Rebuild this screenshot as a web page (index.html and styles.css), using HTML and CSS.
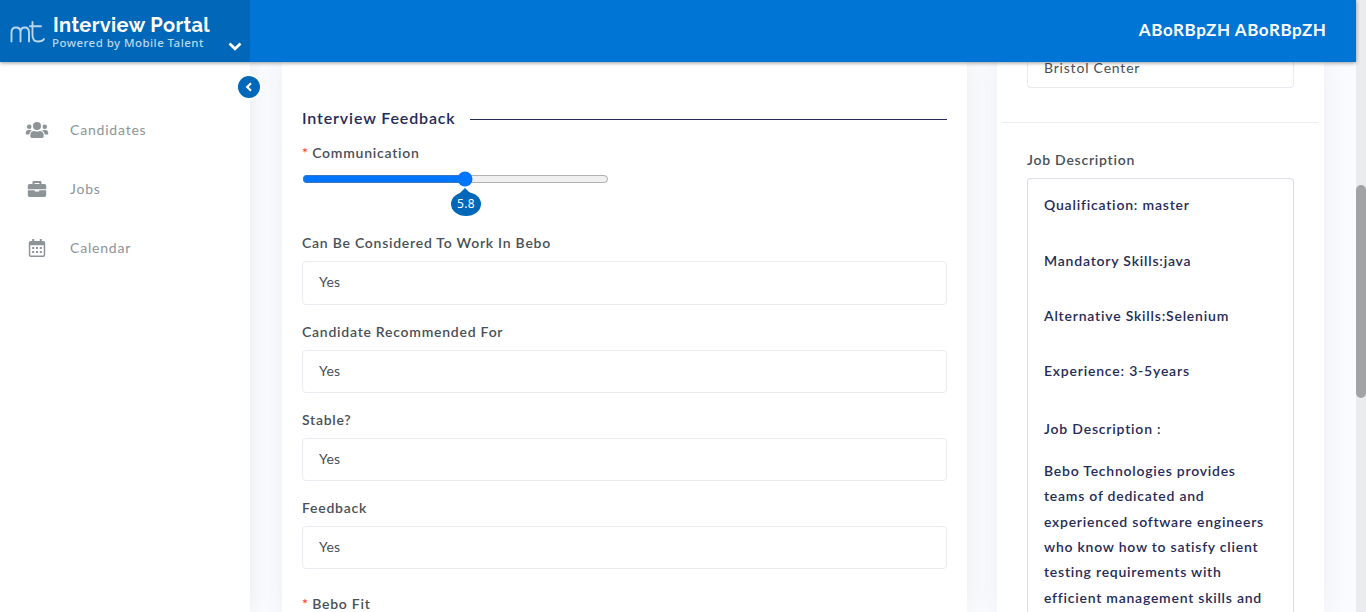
FILE: index.html
```html
<!DOCTYPE html>
<html lang="en">
<head>
<meta charset="utf-8">
<title>Interview Portal</title>
<link rel="stylesheet" href="styles.css">
</head>
<body>
<div class="viewport">
  <div class="app">
    <header class="header">
      <div class="brand">
        <svg class="logo" width="36" height="24" viewBox="0 0 36 24" fill="none" stroke="currentColor" stroke-width="1.9" stroke-linecap="round"><path d="M1.500 20.500V11.500C1.500 8 3.500 6.500 6 6.500S10.500 8 10.500 11V20.500M10.500 11C10.500 8 12.500 6.500 15 6.500S19 8 19 11.500V20.500M22.500 1V14C22.500 18.500 24.500 20.500 28 20.500C30.500 20.500 33 20 34 18M20 5.200H31"/></svg>
        <div class="brand-text">
          <div class="brand-name">Interview Portal</div>
          <div class="brand-sub">Powered by Mobile Talent</div>
        </div>
        <svg class="brand-arrow" width="14" height="10" viewBox="0 0 14 10" fill="none" stroke="#fff" stroke-width="2.700"><path d="M1.500 1.500L7 6.800L12.500 1.500"/></svg>
      </div>
      <div class="user">ABoRBpZH ABoRBpZH</div>
    </header>
    <div class="body">
      <nav class="sidebar">
        <button class="collapse" aria-label="Collapse"><svg width="8" height="10" viewBox="0 0 8 10" fill="none" stroke="#fff" stroke-width="2.200"><path d="M6 1.200L2.200 5L6 8.800"/></svg></button>
        <a class="nav-item"><svg class="nav-icon" width="24" height="20" viewBox="0 0 24 20" fill="currentColor"><circle cx="12" cy="6" r="4"/><circle cx="4.200" cy="6.700" r="2.300"/><circle cx="19.800" cy="6.700" r="2.300"/><path d="M5.300 16.300V15.200C5.300 12.300 7 10.900 9.200 10.900C11 11.600 13 11.600 14.800 10.900C17 10.900 18.700 12.300 18.700 15.200V16.300C18.700 17.300 18 18 17 18H7C6 18 5.300 17.300 5.300 16.300ZM.8 14.600V12.700C.8 11 1.900 9.900 3.300 9.900H5.200C5.900 9.900 6.500 10.200 6.900 10.600C5.400 11.500 4.500 13 4.300 14.600ZM23.200 14.600V12.700C23.200 11 22.100 9.900 20.700 9.900H18.800C18.100 9.900 17.500 10.200 17.100 10.600C18.600 11.500 19.500 13 19.700 14.600Z"/></svg><span>Candidates</span></a>
        <a class="nav-item"><svg class="nav-icon" width="24" height="20" viewBox="0 0 24 20" fill="currentColor"><path fill-rule="evenodd" d="M7.500 5V3.300Q7.500 2 8.800 2H15.200Q16.500 2 16.500 3.300V5H19.500Q21.200 5 21.200 6.700V10.200H2.800V6.700Q2.800 5 4.500 5ZM9.600 5H14.400V3.900H9.600ZM2.800 11.200H9.800V12.500H14.200V11.200H21.200V16.300Q21.200 18 19.500 18H4.500Q2.800 18 2.800 16.300Z"/></svg><span>Jobs</span></a>
        <a class="nav-item"><svg class="nav-icon" width="24" height="20" viewBox="0 0 24 20" fill="currentColor"><path fill-rule="evenodd" d="M5.800 3H7.200V1H9.200V3H14.800V1H16.800V3H18.200Q20.200 3 20.200 5V17Q20.200 19 18.200 19H5.800Q3.800 19 3.800 17V5Q3.800 3 5.800 3ZM5.300 7.300V16.900Q5.300 17.400 5.800 17.400H18.200Q18.700 17.400 18.700 16.900V7.300ZM7.200 9H9.200V11H7.200ZM11 9H13V11H11ZM14.800 9H16.800V11H14.800ZM7.200 13H9.200V15H7.200ZM11 13H13V15H11ZM14.800 13H16.800V15H14.800Z"/></svg><span>Calendar</span></a>
      </nav>
      <main class="content">
        <section class="card feedback">
          <h2 class="section-title"><span>Interview Feedback</span></h2>
          <div class="label"><i>*</i> Communication</div>
          <div class="slider">
            <input class="range" type="range" min="1" max="10" step="0.1" value="5.8">
            <div class="bubble">5.8</div>
          </div>
          <div class="field"><div class="label">Can Be Considered To Work In Bebo</div><div class="value">Yes</div></div>
          <div class="field"><div class="label">Candidate Recommended For</div><div class="value">Yes</div></div>
          <div class="field"><div class="label">Stable?</div><div class="value">Yes</div></div>
          <div class="field"><div class="label">Feedback</div><div class="value">Yes</div></div>
          <div class="label label-fit"><i>*</i> Bebo Fit</div>
        </section>
        <aside class="card details">
          <div class="location">Bristol Center</div>
          <hr class="divider">
          <div class="label jd-label">Job Description</div>
          <div class="jd">
            <p>Qualification: master</p>
            <p>Mandatory Skills:java</p>
            <p>Alternative Skills:Selenium</p>
            <p>Experience: 3-5years</p>
            <p class="jd-head">Job Description :</p>
            <p class="jd-text">Bebo Technologies provides<br>teams of dedicated and<br>experienced software engineers<br>who know how to satisfy client<br>testing requirements with<br>efficient management skills and</p>
          </div>
        </aside>
      </main>
    </div>
  </div>
  <div class="scrollbar"><div class="scroll-thumb"></div></div>
</div>
</body>
</html>
```
FILE: styles.css
```css
* { box-sizing: border-box; }
body { margin: 0; font-family: Lato, "Noto Sans", sans-serif; font-size: 14px; letter-spacing: .8px; color: #495057; }
.viewport { display: flex; width: 1366px; height: 612px; overflow: hidden; }
.app { width: 1356px; display: flex; flex-direction: column; }
.header { flex: 0 0 62px; display: flex; justify-content: space-between; background: #0075d6; box-shadow: 0 1px 4px rgba(0,0,0,.4); position: relative; z-index: 2; }
.brand { width: 250px; background: #0067b9; color: #fff; display: flex; padding: 14px 8px 0 10px; }
.logo { color: #b9d6ed; margin-top: 7px; flex: none; }
.brand-text { width: 182px; padding-left: 6px; white-space: nowrap; }
.brand-name { font: 700 20px/22px Raleway, Lato, sans-serif; letter-spacing: .35px; padding-left: 1px; }
.brand-sub { font: 500 11.5px/14px "Noto Sans", sans-serif; letter-spacing: .45px; color: #b9d8ef; }
.brand-arrow { margin: 28px 0 0; flex: none; }
.user { color: #fff; font-size: 17px; font-weight: 700; line-height: 60px; padding-right: 29.500px; letter-spacing: .59px; }
.body { flex: 1; display: flex; min-height: 0; background: #fafbfe; }
.sidebar { position: relative; z-index: 1; width: 250px; background: #fff; padding-top: 58px; box-shadow: 0 0 18px rgba(40,50,70,.09); }
.collapse { position: absolute; right: -10px; top: 14px; width: 22px; height: 22px; border: 0; border-radius: 50%; padding: 0; background: #0067b9; box-shadow: 0 0 0 2px #fff; display: flex; align-items: center; justify-content: center; }
.nav-item { display: flex; align-items: center; height: 20px; margin-bottom: 39px; padding-left: 25px; color: #8d9498; }
.nav-item span { padding-bottom: 2px; }
.nav-icon { margin-right: 21px; }
.content { flex: 1; display: flex; gap: 30px; padding-left: 32px; align-items: stretch; }
.card { background: #fff; box-shadow: 0 0 24px rgba(40,50,70,.07); }
.feedback { width: 685px; padding: 46px 20px 0; }
.section-title { margin: 0 0 15px; height: 20px; display: flex; align-items: center; gap: 14px; color: #252b58; font-size: 16px; font-weight: 600; line-height: 20px; letter-spacing: .86px; }
.section-title::after { content: ""; flex: 1; height: 1px; background: #252b58; margin-top: 2px; }
.label { height: 20px; line-height: 20px; font-weight: 600; color: #495057; white-space: nowrap; letter-spacing: .75px; }
.label i { color: #f53b3b; font-style: normal; font-weight: 600; letter-spacing: 0; }
.slider { position: relative; height: 70.3px; padding: 8px 0 0; }
.range { display: block; width: 307px; height: 16px; margin: 0; }
.bubble { position: absolute; left: 149px; top: 29px; width: 30px; height: 24px; border-radius: 50%; background: #0067b9; color: #fff; text-align: center; font: 12px/24px "Noto Sans", sans-serif; letter-spacing: .3px; }
.bubble::before { content: ""; position: absolute; left: 8px; top: -4px; border: 6px solid transparent; border-top: 0; border-bottom-color: #0067b9; }
.field { height: 88.3px; }
.field:nth-of-type(3) .value { height: 43.7px; }
.value { margin-top: 8px; height: 43.2px; border: 1px solid #ebebf2; border-radius: 4px; padding-left: 16px; line-height: 40.300px; letter-spacing: .2px; }
.label-fit { margin-top: 7.500px; }
.details { width: 327px; padding: 0 5px; }
.location { height: 26px; margin: 0 25px; border: 1px solid #e9e9ef; border-top: 0; border-radius: 0 0 4px 4px; padding-left: 16px; line-height: 11px; }
.divider { height: 1px; border: 0; background: #ededf1; margin: 34px 0 27px; }
.jd-label { margin-left: 25px; }
.jd { margin: 8px 25px 0; border: 1px solid #dcdce4; border-bottom: 0; border-radius: 4px 4px 0 0; height: 434px; padding: 13.300px 0 0 16px; color: #252b58; font-weight: 600; white-space: nowrap; }
.jd p { margin: 0 0 29.900px; line-height: 25.400px; }
.jd .jd-head { margin: 32px 0 16.800px; }
.jd .jd-text { margin: 0; letter-spacing: .76px; }
.scrollbar { width: 10px; background: #ebecef; padding-top: 185px; }
.scroll-thumb { height: 213px; border-radius: 5px; background: #a2a3a5; }
```
